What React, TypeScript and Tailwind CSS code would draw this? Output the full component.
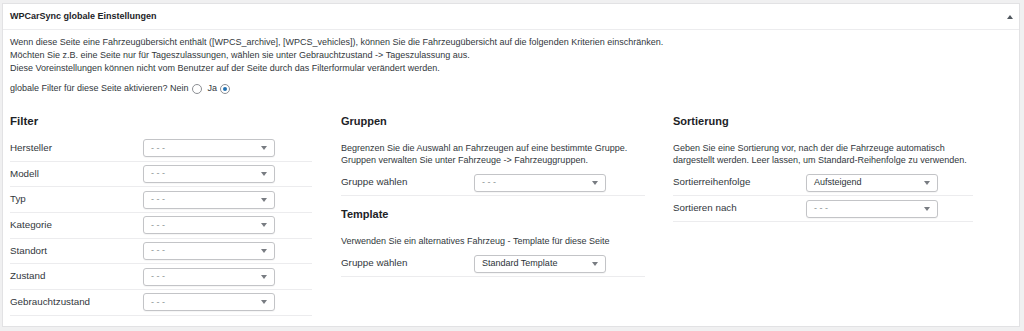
import React from "react";

const filterRows = [
  "Hersteller",
  "Modell",
  "Typ",
  "Kategorie",
  "Standort",
  "Zustand",
  "Gebrauchtzustand",
];

function Select({ value, dim }: { value: string; dim?: boolean }) {
  return (
    <div className="w-[132px] h-[18px] border border-[#c3c4c7] rounded-[3px] bg-white flex items-center justify-between pl-[7px] pr-[7px] shadow-[0_1px_1px_rgba(0,0,0,0.04)]">
      <span className={dim ? "text-[#8c8f94] text-[9px]" : "text-[#2c3338] text-[9px]"}>{value}</span>
      <svg width="6" height="4" viewBox="0 0 6 4">
        <path d="M0 0 L6 0 L3 4 Z" fill="#787c82" />
      </svg>
    </div>
  );
}

function Row({ label, value, dim, h = "h-[25.7px]" }: { label: string; value: string; dim?: boolean; h?: string }) {
  return (
    <div className={`${h} border-b border-[#ececee] flex items-center`}>
      <span className="w-[133px] shrink-0 text-[9.8px] text-[#32373c]">{label}</span>
      <Select value={value} dim={dim} />
    </div>
  );
}

export default function App() {
  return (
    <div className="w-[1024px] h-[331px] bg-[#f0f0f1] pt-[3px] pl-[2px] pr-[4px] font-['Liberation_Sans','Arial',sans-serif]">
      <div className="h-[324px] bg-white border border-[#e2e2e4] flex flex-col">
        {/* Header */}
        <div className="h-[26px] border-b border-[#ececee] flex items-center justify-between pl-[7px] pr-[6px]">
          <span className="text-[9px] font-bold text-[#1d2327]">WPCarSync globale Einstellungen</span>
          <svg width="6" height="4" viewBox="0 0 6 4">
            <path d="M0 4 L6 4 L3 0 Z" fill="#50575e" />
          </svg>
        </div>

        <div className="pl-[7px] pt-[6px] text-[#32373c]">
          <p className="text-[9px] leading-[13px]">
            Wenn diese Seite eine Fahrzeugübersicht enthält ([WPCS_archive], [WPCS_vehicles]), können Sie die Fahrzeugübersicht auf die folgenden Kriterien einschränken.
            <br />
            Möchten Sie z.B. eine Seite nur für Tageszulassungen, wählen sie unter Gebrauchtzustand -&gt; Tageszulassung aus.
            <br />
            Diese Voreinstellungen können nicht vom Benutzer auf der Seite durch das Filterformular verändert werden.
          </p>
          <div className="mt-[7px] h-[13px] flex items-center text-[9px]">
            <span>globale Filter für diese Seite aktivieren? Nein</span>
            <span className="ml-[3px] w-[10px] h-[10px] rounded-full border border-[#8c8f94] bg-white" />
            <span className="ml-[6px]">Ja</span>
            <span className="ml-[3px] w-[10px] h-[10px] rounded-full border border-[#8c8f94] bg-white flex items-center justify-center">
              <span className="w-[4px] h-[4px] rounded-full bg-[#2271b1]" />
            </span>
          </div>

          <div className="flex mt-[19px]">
            {/* Filter */}
            <div className="w-[331px] pr-[29px]">
              <h3 className="text-[11.5px] font-bold text-[#1d2327] leading-[14px]">Filter</h3>
              <div className="mt-[8px]">
                {filterRows.map((r) => (
                  <Row key={r} label={r} value="- - -" dim />
                ))}
              </div>
            </div>

            {/* Gruppen / Template */}
            <div className="w-[332px] pr-[28px]">
              <h3 className="text-[11px] font-bold text-[#1d2327] leading-[14px]">Gruppen</h3>
              <p className="mt-[14px] text-[9px] leading-[12px]">
                Begrenzen Sie die Auswahl an Fahrzeugen auf eine bestimmte Gruppe.
                <br />
                Gruppen verwalten Sie unter Fahrzeuge -&gt; Fahrzeuggruppen.
              </p>
              <div className="mt-[4px]">
                <Row label="Gruppe wählen" value="- - -" dim h="h-[26px]" />
              </div>
              <h3 className="mt-[11px] text-[11px] font-bold text-[#1d2327] leading-[14px]">Template</h3>
              <p className="mt-[14px] text-[9px] leading-[12px]">
                Verwenden Sie ein alternatives Fahrzeug - Template für diese Seite
              </p>
              <div className="mt-[4px]">
                <Row label="Gruppe wählen" value="Standard Template" h="h-[26px]" />
              </div>
            </div>

            {/* Sortierung */}
            <div className="w-[330px] pr-[30px]">
              <h3 className="text-[11px] font-bold text-[#1d2327] leading-[14px]">Sortierung</h3>
              <p className="mt-[14px] text-[9px] leading-[12px] whitespace-nowrap">
                Geben Sie eine Sortierung vor, nach der die Fahrzeuge automatisch
                <br />
                dargestellt werden. Leer lassen, um Standard-Reihenfolge zu verwenden.
              </p>
              <div className="mt-[4px]">
                <Row label="Sortierreihenfolge" value="Aufsteigend" h="h-[26px]" />
                <Row label="Sortieren nach" value="- - -" dim h="h-[26px]" />
              </div>
            </div>
          </div>
        </div>
      </div>
    </div>
  );
}
